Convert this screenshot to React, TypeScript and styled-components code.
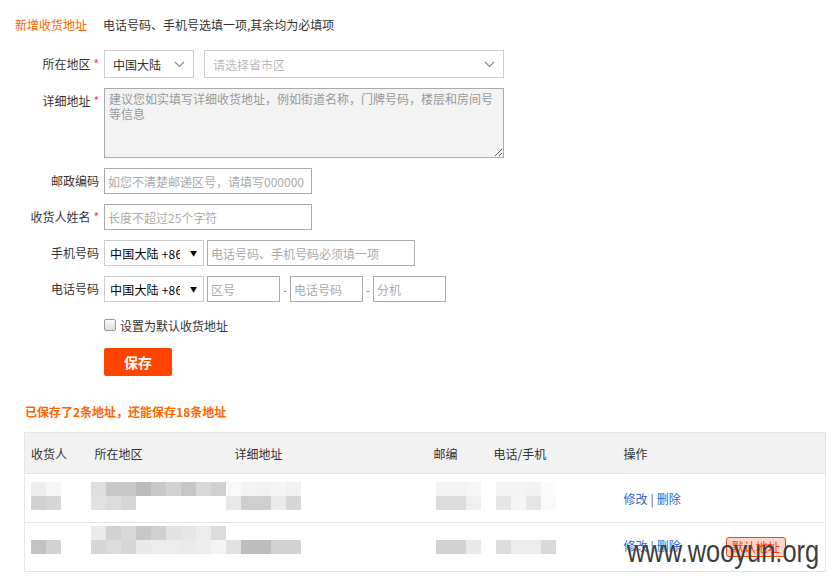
import styled, { createGlobalStyle } from "styled-components";

const GlobalStyle = createGlobalStyle`
    * {
        box-sizing: border-box;
    }
    body {
        margin: 0;
        background: #fff;
        color: #333;
        font-family: "Noto Sans CJK SC", "Liberation Sans", sans-serif;
        font-size: 12px;
    }
`

const Page = styled.div`
    position: relative;
    width: 832px;
    height: 581px;
    overflow: hidden;
    padding-top: 17px;
`

const Heading = styled.div`
    display: flex;
    align-items: center;
    gap: 16px;
    margin-left: 15px;
    height: 16px;
    line-height: 16px;
`

const Title = styled.span`
    color: #f60;
`

const Note = styled.span`
    color: #333;
`

const Form = styled.div`
    display: flex;
    flex-direction: column;
    gap: 10px;
    margin-top: 17px;
`

const FieldRow = styled.div<{ $top?: boolean }>`
    display: grid;
    grid-template-columns: 99px auto;
    column-gap: 5px;
    align-items: ${p => (p.$top ? "start" : "center")};
`

const Label = styled.label<{ $top?: boolean }>`
    text-align: right;
    color: #333;
    line-height: 16px;
    padding-top: ${p => (p.$top ? "5px" : "0")};
`

const Star = styled.span`
    color: #f36;
    margin-left: 3px;
`

const Fields = styled.div`
    display: flex;
    align-items: center;
`

const SelectBox = styled.div<{ $width: number }>`
    display: flex;
    align-items: center;
    justify-content: space-between;
    width: ${p => p.$width}px;
    height: 28px;
    border: 1px solid #ccc;
    padding: 0 8px;
    color: #333;
    margin-right: 10px;
`

const SelectText = styled.span<{ $muted?: boolean }>`
    color: ${p => (p.$muted ? "#bbb" : "#333")};
`

const TextArea = styled.textarea`
    width: 400px;
    height: 70px;
    border: 1px solid #aaa;
    background: #f3f3f3;
    padding: 2px 4px;
    font-family: inherit;
    font-size: 12px;
    line-height: 15px;
    resize: vertical;
    outline: none;
    &::placeholder {
        color: #999;
    }
`

const TextInput = styled.input<{ $width: number }>`
    width: ${p => p.$width}px;
    height: 26px;
    border: 1px solid #aaa;
    padding: 0 3px;
    font-family: inherit;
    font-size: 12px;
    outline: none;
    &::placeholder {
        color: #aaa;
    }
`

const PhoneSelect = styled.div`
    display: flex;
    align-items: center;
    width: 100px;
    height: 26px;
    border: 1px solid #ccc;
    padding: 0 6px 0 5px;
    margin-right: 3px;
    color: #000;
`

const PhoneText = styled.span`
    width: 70px;
    overflow: hidden;
    white-space: nowrap;
    letter-spacing: 0.2px;
`

const Arrow = styled.span`
    margin-left: auto;
    font-size: 7px;
    color: #000;
`

const Dash = styled.span`
    width: 10px;
    text-align: center;
    color: #69c;
`

const CheckRow = styled.label`
    display: flex;
    align-items: center;
    gap: 4px;
    margin: 15px 0 0 104px;
    height: 16px;
`

const CheckBox = styled.span`
    width: 12px;
    height: 12px;
    border: 1px solid #999;
    border-radius: 2px;
    background: linear-gradient(#fcfcfc, #dcdcdc);
`

const SaveButton = styled.button`
    margin: 15px 0 0 104px;
    width: 68px;
    height: 28px;
    border: none;
    border-radius: 2px;
    background: #f40;
    color: #fff;
    font-family: inherit;
    font-size: 14px;
    font-weight: bold;
    cursor: pointer;
`

const SavedNote = styled.div`
    margin: 28px 0 0 25px;
    color: #f60;
    font-weight: bold;
    line-height: 16px;
`

const Table = styled.table`
    margin: 12px 0 0 24px;
    width: 801px;
    border-collapse: collapse;
    border: 1px solid #e6e6e6;
    table-layout: fixed;
`

const HeadCell = styled.th<{ $width: number }>`
    width: ${p => p.$width}px;
    height: 41px;
    background: #f2f2f2;
    font-weight: normal;
    text-align: left;
    padding: 0 6px;
    color: #333;
    border-bottom: 1px solid #e6e6e6;
`

const BodyRow = styled.tr`
    height: 49px;
    border-bottom: 1px solid #e6e6e6;
`

const Cell = styled.td<{ $inset: number }>`
    vertical-align: top;
    padding: ${p => p.$inset}px 6px 0;
    overflow: visible;
    white-space: nowrap;
`

const OpsCell = styled.td`
    vertical-align: middle;
    padding: 0 6px;
    white-space: nowrap;
`

const Link = styled.a`
    color: #36c;
    text-decoration: none;
`

const Bar = styled.span`
    color: #639;
    margin: 0 3px;
`

const Badge = styled.span`
    display: inline-block;
    margin-left: 45px;
    width: 60px;
    height: 20px;
    line-height: 18px;
    text-align: center;
    border: 1px solid #f40;
    border-radius: 3px;
    background: #ffd6cc;
    color: #f30;
    vertical-align: middle;
`

const MosaicGrid = styled.div<{ $cols: number; $shift: number }>`
    display: grid;
    grid-template-columns: repeat(${p => p.$cols}, 15px);
    grid-auto-rows: 14px;
    margin-left: ${p => p.$shift}px;
    width: max-content;
`

const Tile = styled.span<{ $c: string }>`
    background: ${p => p.$c};
`

const Watermark = styled.div`
    position: absolute;
    left: 627px;
    top: 536px;
    font-family: "Liberation Sans", Arial, sans-serif;
    font-size: 31px;
    line-height: 31px;
    color: #3d3d3d;
    transform: scaleX(0.82);
    transform-origin: left top;
    white-space: nowrap;
    pointer-events: none;
`

function Chevron() {
    return (
        <svg width="11" height="7" viewBox="0 0 11 7">
            <polyline points="1,1 5.5,5.5 10,1" fill="none" stroke="#888" strokeWidth="1.2" />
        </svg>
    )
}

function Mosaic({ rows, shift }: { rows: string[][]; shift: number }) {
    return (
        <MosaicGrid $cols={rows[0].length} $shift={shift}>
            {rows.flat().map((c, i) => (
                <Tile key={i} $c={c} />
            ))}
        </MosaicGrid>
    )
}

const T = "transparent"

const rowOne = {
    name: [["#eeeeee", "#f6f6f6"], ["#d1d1d1", "#d6d6d6"]],
    region: [
        ["#dedede", "#c8c8c8", "#c8c8c8", "#bbbbbb", "#c8c8c8", "#d2d2d2", "#c6c6c6", "#d8d8d8", "#d0d0d0"],
        ["#e2e2e2", "#dcdcdc", "#d6d6d6", T, T, T, T, T, T],
    ],
    detail: [["#f8f8f8", "#f3f3f3", "#f1f1f1", "#f5f5f5", "#f1f1f1"], ["#e8e8e8", "#cecece", "#cecece", "#ebebeb", "#d6d6d6"]],
    zip: [["#f3f3f3", "#f3f3f3", "#f6f6f6"], ["#dcdcdd", "#dcdcdd", "#eef0ee"]],
    phone: [["#f4f4f4", "#f4f4f4", "#f2f2f2", "#fbfbfb"], ["#e5e6e5", "#f5f5f5", "#e6e5e3", "#f8f9fb"]],
}

const rowTwo = {
    name: [[T, T], ["#c2c2c2", "#d3d3d3"]],
    region: [
        ["#eaeaea", "#d2d2d2", "#d8d8d8", "#c6c6c6", "#d0d0d0", "#e2e2e2", "#e6e6e6", "#ececec", "#dcdcdc"],
        ["#d6d6d6", "#dcdcdc", "#d6d6d6", "#e9e9e9", "#ececec", "#ececec", "#eaeaea", "#ededed", "#f4f4f4"],
    ],
    detail: [[T, T, T, T, T], ["#e2e2e2", "#bdbdbd", "#bdbdbd", "#d3d3d3", "#d3d3d3"]],
    zip: [[T, T, T], ["#d3d2d4", "#d3d2d4", "#e8e9eb"]],
    phone: [[T, T, T, T], ["#dcdcdc", "#ececec", "#ececec", "#d8d8d8"]],
}

export default function App() {
    return (
        <Page>
            <GlobalStyle />
            <Heading>
                <Title>新增收货地址</Title>
                <Note>电话号码、手机号选填一项,其余均为必填项</Note>
            </Heading>

            <Form>
                <FieldRow>
                    <Label>所在地区<Star>*</Star></Label>
                    <Fields>
                        <SelectBox $width={90}>
                            <SelectText>中国大陆</SelectText>
                            <Chevron />
                        </SelectBox>
                        <SelectBox $width={300}>
                            <SelectText $muted>请选择省市区</SelectText>
                            <Chevron />
                        </SelectBox>
                    </Fields>
                </FieldRow>

                <FieldRow $top>
                    <Label $top>详细地址<Star>*</Star></Label>
                    <TextArea placeholder="建议您如实填写详细收货地址，例如街道名称，门牌号码，楼层和房间号等信息" />
                </FieldRow>

                <FieldRow>
                    <Label>邮政编码</Label>
                    <TextInput $width={208} placeholder="如您不清楚邮递区号，请填写000000" />
                </FieldRow>

                <FieldRow>
                    <Label>收货人姓名<Star>*</Star></Label>
                    <TextInput $width={208} placeholder="长度不超过25个字符" />
                </FieldRow>

                <FieldRow>
                    <Label>手机号码</Label>
                    <Fields>
                        <PhoneSelect>
                            <PhoneText>中国大陆 +86</PhoneText>
                            <Arrow>▼</Arrow>
                        </PhoneSelect>
                        <TextInput $width={208} placeholder="电话号码、手机号码必须填一项" />
                    </Fields>
                </FieldRow>

                <FieldRow>
                    <Label>电话号码</Label>
                    <Fields>
                        <PhoneSelect>
                            <PhoneText>中国大陆 +86</PhoneText>
                            <Arrow>▼</Arrow>
                        </PhoneSelect>
                        <TextInput $width={73} placeholder="区号" />
                        <Dash>-</Dash>
                        <TextInput $width={73} placeholder="电话号码" />
                        <Dash>-</Dash>
                        <TextInput $width={73} placeholder="分机" />
                    </Fields>
                </FieldRow>
            </Form>

            <CheckRow>
                <CheckBox />
                设置为默认收货地址
            </CheckRow>

            <SaveButton>保存</SaveButton>

            <SavedNote>已保存了2条地址，还能保存18条地址</SavedNote>

            <Table>
                <thead>
                    <tr>
                        <HeadCell $width={64}>收货人</HeadCell>
                        <HeadCell $width={140}>所在地区</HeadCell>
                        <HeadCell $width={199}>详细地址</HeadCell>
                        <HeadCell $width={60}>邮编</HeadCell>
                        <HeadCell $width={130}>电话/手机</HeadCell>
                        <HeadCell $width={208}>操作</HeadCell>
                    </tr>
                </thead>
                <tbody>
                    {[rowOne, rowTwo].map((r, i) => (
                        <BodyRow key={i}>
                            <Cell $inset={i === 0 ? 8 : 3}><Mosaic rows={r.name} shift={0} /></Cell>
                            <Cell $inset={i === 0 ? 8 : 3}><Mosaic rows={r.region} shift={-4} /></Cell>
                            <Cell $inset={i === 0 ? 8 : 3}><Mosaic rows={r.detail} shift={-9} /></Cell>
                            <Cell $inset={i === 0 ? 8 : 3}><Mosaic rows={r.zip} shift={2} /></Cell>
                            <Cell $inset={i === 0 ? 8 : 3}><Mosaic rows={r.phone} shift={2} /></Cell>
                            <OpsCell>
                                <Link href="#">修改</Link>
                                <Bar>|</Bar>
                                <Link href="#">删除</Link>
                                {i === 1 && <Badge>默认地址</Badge>}
                            </OpsCell>
                        </BodyRow>
                    ))}
                </tbody>
            </Table>

            <Watermark>www.wooyun.org</Watermark>
        </Page>
    )
}
